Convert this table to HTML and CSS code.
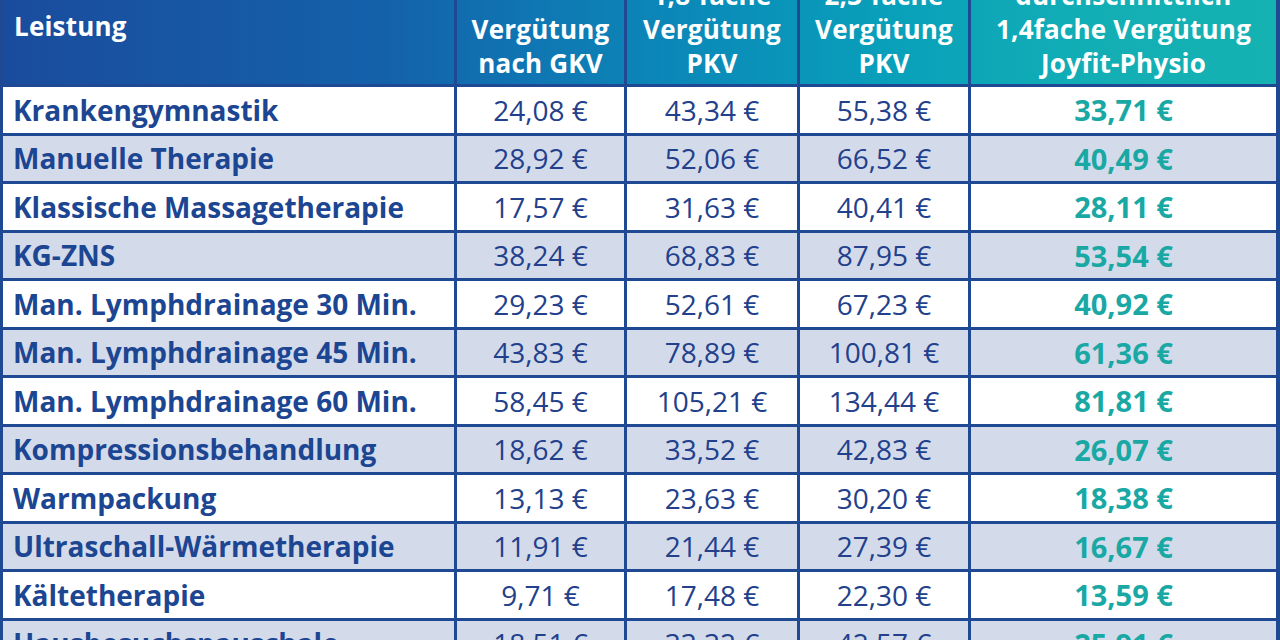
FILE: index.html
```html
<!DOCTYPE html>
<html lang="de">
<head>
<meta charset="utf-8">
<title>Vergütung Physiotherapie</title>
<link rel="stylesheet" href="styles.css">
</head>
<body>
<div class="table">
  <div class="thead">
    <div class="th th-label"><span>Leistung</span></div>
    <div class="th"><span>Vergütung</span><span>nach GKV</span></div>
    <div class="th"><span>1,8-fache</span><span>Vergütung</span><span>PKV</span></div>
    <div class="th"><span>2,3-fache</span><span>Vergütung</span><span>PKV</span></div>
    <div class="th"><span>durchschnittlich</span><span>1,4fache Vergütung</span><span>Joyfit-Physio</span></div>
  </div>
  <div class="tbody">
    <div class="row"><div class="td label">Krankengymnastik</div><div class="td">24,08 €</div><div class="td">43,34 €</div><div class="td">55,38 €</div><div class="td joy">33,71 €</div></div>
    <div class="row alt"><div class="td label">Manuelle Therapie</div><div class="td">28,92 €</div><div class="td">52,06 €</div><div class="td">66,52 €</div><div class="td joy">40,49 €</div></div>
    <div class="row"><div class="td label">Klassische Massagetherapie</div><div class="td">17,57 €</div><div class="td">31,63 €</div><div class="td">40,41 €</div><div class="td joy">28,11 €</div></div>
    <div class="row alt"><div class="td label">KG-ZNS</div><div class="td">38,24 €</div><div class="td">68,83 €</div><div class="td">87,95 €</div><div class="td joy">53,54 €</div></div>
    <div class="row"><div class="td label">Man. Lymphdrainage 30 Min.</div><div class="td">29,23 €</div><div class="td">52,61 €</div><div class="td">67,23 €</div><div class="td joy">40,92 €</div></div>
    <div class="row alt"><div class="td label">Man. Lymphdrainage 45 Min.</div><div class="td">43,83 €</div><div class="td">78,89 €</div><div class="td">100,81 €</div><div class="td joy">61,36 €</div></div>
    <div class="row"><div class="td label">Man. Lymphdrainage 60 Min.</div><div class="td">58,45 €</div><div class="td">105,21 €</div><div class="td">134,44 €</div><div class="td joy">81,81 €</div></div>
    <div class="row alt"><div class="td label">Kompressionsbehandlung</div><div class="td">18,62 €</div><div class="td">33,52 €</div><div class="td">42,83 €</div><div class="td joy">26,07 €</div></div>
    <div class="row"><div class="td label">Warmpackung</div><div class="td">13,13 €</div><div class="td">23,63 €</div><div class="td">30,20 €</div><div class="td joy">18,38 €</div></div>
    <div class="row alt"><div class="td label">Ultraschall-Wärmetherapie</div><div class="td">11,91 €</div><div class="td">21,44 €</div><div class="td">27,39 €</div><div class="td joy">16,67 €</div></div>
    <div class="row"><div class="td label">Kältetherapie</div><div class="td">9,71 €</div><div class="td">17,48 €</div><div class="td">22,30 €</div><div class="td joy">13,59 €</div></div>
    <div class="row alt"><div class="td label">Hausbesuchspauschale</div><div class="td">18,51 €</div><div class="td">33,32 €</div><div class="td">42,57 €</div><div class="td joy">25,91 €</div></div>
  </div>
</div>
</body>
</html>
```

FILE: styles.css
```css
html, body {
  margin: 0;
  padding: 0;
  background: #ffffff;
}

body {
  width: 1280px;
  height: 640px;
  overflow: hidden;
  font-family: "Open Sans", "Liberation Sans", sans-serif;
}

.table {
  margin-top: -53px;
  width: 1280px;
  background: #1f4a93;
}

.thead {
  display: grid;
  grid-template-columns: 451px 170px 173px 171px 308px;
  height: 140px;
  border-left: 3px solid #1f4a93;
  border-right: 4px solid #1f4a93;
  border-bottom: 3px solid #1f4a93;
  box-sizing: border-box;
  background: linear-gradient(90deg, #1a4c9d 0%, #1461aa 30%, #0f77b3 42%, #0a8db9 56%, #09a0ba 70%, #12aeb5 85%, #15b2b2 100%);
}

.th {
  display: flex;
  flex-direction: column;
  justify-content: flex-end;
  align-items: center;
  padding-bottom: 4px;
  border-left: 3px solid #1f4a93;
  color: #ffffff;
  font-weight: 700;
  font-size: 26px;
  line-height: 34px;
  letter-spacing: 0.2px;
  white-space: nowrap;
}

.th-label {
  border-left: 0;
  align-items: flex-start;
  padding-left: 11px;
  padding-bottom: 41px;
}

.tbody {
  display: flex;
  flex-direction: column;
  gap: 3px;
  padding: 0 4px 3px 3px;
}

.row {
  display: grid;
  grid-template-columns: 451px 167px 170px 168px 305px;
  column-gap: 3px;
  height: 45.5px;
}

.td {
  display: flex;
  align-items: center;
  justify-content: center;
  background: #ffffff;
  color: #22408b;
  font-size: 28px;
  font-weight: 400;
  white-space: nowrap;
}

.row.alt .td {
  background: #d3dbeb;
}

.td.label {
  justify-content: flex-start;
  padding-left: 10px;
  font-weight: 700;
  color: #1c4592;
}

.td.joy {
  font-weight: 700;
  font-size: 29px;
  color: #19a8a4;
}
```
